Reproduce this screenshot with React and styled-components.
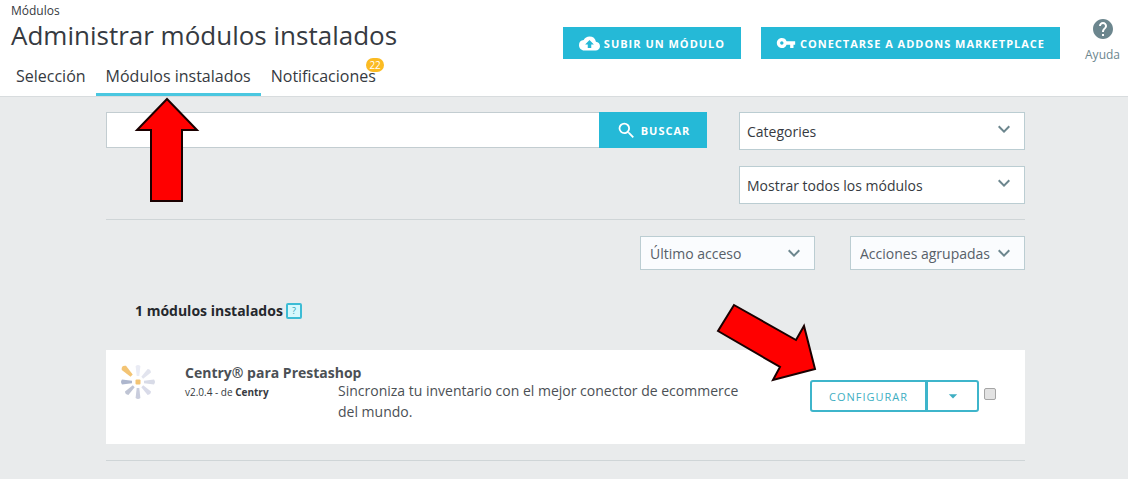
import React from "react";
import styled, { createGlobalStyle } from "styled-components";
import {
  MdArrowDropDown,
  MdCloudUpload,
  MdExpandMore,
  MdHelp,
  MdSearch,
  MdVpnKey,
} from "react-icons/md";

const GlobalStyle = createGlobalStyle`
  * {
    box-sizing: border-box;
  }

  body {
    margin: 0;
    background: #e9ebec;
    color: #363a41;
    font-family: "Open Sans", sans-serif;
    font-size: 14px;
  }

  button, input, select {
    font-family: inherit;
    margin: 0;
  }
`;

const Page = styled.div`
  position: relative;
`;

const Header = styled.header`
  display: flex;
  justify-content: space-between;
  background: #fff;
  border-bottom: 1px solid #d8dcde;
`;

const Crumb = styled.div`
  padding: 2px 11px 0;
  font-size: 12px;
  line-height: 18px;
`;

const PageTitle = styled.h1`
  margin: 0;
  padding: 0 11px;
  font-size: 26px;
  font-weight: 400;
  line-height: 30px;
`;

const Tabs = styled.nav`
  display: flex;
  padding: 10px 6px 0;
`;

const Tab = styled.a`
  position: relative;
  padding: 4px 10px 5px;
  border-bottom: 3px solid ${(props) => (props.$active ? "#4ac7e0" : "transparent")};
  color: #363a41;
  font-size: 16px;
  line-height: 24px;
  text-decoration: none;
`;

const TabBadge = styled.span`
  position: absolute;
  top: -2px;
  right: 2px;
  padding: 0 3px;
  border-radius: 7px;
  background: #fbbb22;
  color: #fff;
  font-size: 10px;
  line-height: 14px;
`;

const Actions = styled.div`
  display: flex;
  align-items: flex-start;
  gap: 20px;
  padding: 0 8px 0 0;
`;

const PrimaryButton = styled.button`
  display: flex;
  align-items: center;
  justify-content: center;
  gap: 4px;
  min-width: ${(props) => props.$minWidth || 0}px;
  height: ${(props) => props.$height || 32}px;
  padding: 0 15px;
  border: 0;
  background: #25b9d7;
  color: #fff;
  font-size: 11px;
  font-weight: 700;
  letter-spacing: 1px;
  text-transform: uppercase;
  white-space: nowrap;
  cursor: pointer;
`;

const HeaderButton = styled(PrimaryButton)`
  margin-top: 27px;
`;

const HelpLink = styled.a`
  display: flex;
  flex-direction: column;
  align-items: center;
  gap: 5px;
  margin: 17px 0 0 5px;
  color: #6c868e;
  font-size: 12px;
  line-height: 18px;
  text-decoration: none;
`;

const Content = styled.main`
  padding: 15px 103px 18px 106px;
`;

const Filters = styled.div`
  display: flex;
  align-items: flex-start;
  gap: 32px;
  padding-bottom: 15px;
  border-bottom: 1px solid #cfd5d7;
`;

const SearchForm = styled.form`
  display: flex;
  flex: 1;
`;

const SearchInput = styled.input`
  flex: 1;
  min-width: 0;
  height: 36px;
  padding: 0 10px;
  border: 1px solid #c3cdd1;
  border-right: 0;
  border-radius: 0;
  background: #fff;
  font-size: 14px;
`;

const FilterColumn = styled.div`
  display: flex;
  flex-direction: column;
  gap: 16px;
  width: 286px;
`;

const SelectWrap = styled.div`
  display: grid;
  align-items: center;
  width: ${(props) => props.$width || "100%"};
  color: #6c868e;

  > * {
    grid-area: 1 / 1;
  }

  svg {
    justify-self: end;
    margin: 0 9px ${(props) => (props.$small ? 0 : 4)}px 0;
    pointer-events: none;
  }
`;

const SelectBox = styled.select`
  width: 100%;
  height: ${(props) => (props.$small ? 34 : 38)}px;
  padding: 0 ${(props) => (props.$small ? 9 : 7)}px;
  border: 1px solid #bbcdd2;
  border-radius: 0;
  appearance: none;
  background: ${(props) => (props.$small ? "#fafcfe" : "#fff")};
  color: ${(props) => (props.$small ? "#576069" : "#363a41")};
  font-size: 14px;
`;

const BulkActions = styled.div`
  display: flex;
  justify-content: flex-end;
  gap: 35px;
  padding-top: 16px;
`;

const ListTitle = styled.h2`
  display: flex;
  align-items: center;
  gap: 3px;
  margin: 31px 0 29px 29px;
  font-size: 14px;
  font-weight: 700;
  line-height: 20px;
  color: #25282d;
`;

const HintButton = styled.button`
  width: 16px;
  height: 16px;
  padding: 0;
  border: 2px solid #3dbcd5;
  border-radius: 2px;
  background: #d6f8fd;
  color: #2f9fb5;
  font-size: 9px;
  line-height: 12px;
`;

const ModuleCard = styled.article`
  display: flex;
  align-items: flex-start;
  min-height: 94px;
  background: #fff;
`;

const ModuleLogo = styled.svg`
  flex: none;
  margin: 14px 29px 0 14px;
`;

const ModuleName = styled.h3`
  margin: 13px 0 0;
  font-size: 14px;
  font-weight: 700;
  line-height: 20px;
  color: #4b5055;
  white-space: nowrap;
`;

const ModuleVersion = styled.div`
  font-size: 10px;
  line-height: 18px;
`;

const ModuleInfo = styled.div`
  width: 153px;
  flex: none;
`;

const ModuleDescription = styled.p`
  flex: 1;
  max-width: 420px;
  margin: 30px 0 0;
  line-height: 21px;
  color: #4b5055;
`;

const ModuleActions = styled.div`
  display: flex;
  align-items: center;
  margin: 30px 29px 0 auto;
`;

const OutlineButton = styled.button`
  display: flex;
  align-items: center;
  justify-content: center;
  width: ${(props) => props.$width}px;
  height: 32px;
  padding: 0;
  border: 2px solid #3eb5cb;
  border-radius: ${(props) => (props.$last ? "0 3px 3px 0" : "3px 0 0 3px")};
  border-left-width: ${(props) => (props.$last ? 1 : 2)}px;
  background: #fff;
  color: #3eaec2;
  font-size: 11px;
  font-weight: 400;
  letter-spacing: 1px;
  text-transform: uppercase;
  cursor: pointer;
`;

const ModuleCheckbox = styled.input`
  width: 12px;
  height: 12px;
  margin: 0 0 4px 5px;
  border: 1px solid #a5a5a5;
  border-radius: 2px;
  appearance: none;
  background: #e2e2e2;
`;

const Divider = styled.hr`
  margin: 16px 0 0;
  border: 0;
  border-top: 1px solid #cfd5d7;
`;

const Arrow = styled.svg`
  position: absolute;
  left: ${(props) => props.$left}px;
  top: ${(props) => props.$top}px;
  pointer-events: none;

  polygon {
    fill: #ff0000;
    stroke: #1a0000;
    stroke-width: 2;
  }
`;

const Select = ({ label, options, small, width }) => (
  <SelectWrap $small={small} $width={width}>
    <SelectBox $small={small} aria-label={label}>
      {options.map((option) => (
        <option key={option}>{option}</option>
      ))}
    </SelectBox>
    <MdExpandMore size={24} />
  </SelectWrap>
);

const CentryLogo = () => (
  <ModuleLogo width="36" height="36" viewBox="-18 -18 36 36" aria-hidden="true">
    {[
      ["#e9ebf4", 0],
      ["#e2e4ee", 45],
      ["#d8dbe7", 90],
      ["#d9dbe9", 135],
      ["#c9cddd", 180],
      ["#bfc4d4", 225],
      ["#adb6cd", 270],
      ["#f3c474", 315],
    ].map(([color, angle]) => (
      <path
        key={angle}
        d={angle === 315 ? "M-1.5 -9 L-3 -20 Q0 -24 3 -20 L1.5 -9 Z" : "M-1.3 -6 L-2.4 -16 Q0 -18 2.4 -16 L1.3 -6 Z"}
        fill={color}
        transform={`rotate(${angle})`}
      />
    ))}
    <rect x="-2.5" y="-2.5" width="5" height="5" rx="1" fill="#f3c474" />
  </ModuleLogo>
);

const App = () => {
  return (
    <Page>
      <GlobalStyle />
      <Header>
        <div>
          <Crumb>Módulos</Crumb>
          <PageTitle>Administrar módulos instalados</PageTitle>
          <Tabs>
            <Tab href="#seleccion">Selección</Tab>
            <Tab href="#instalados" $active>Módulos instalados</Tab>
            <Tab href="#notificaciones">
              Notificaciones
              <TabBadge>22</TabBadge>
            </Tab>
          </Tabs>
        </div>
        <Actions>
          <HeaderButton $minWidth={178}>
            <MdCloudUpload size={21} />
            Subir un módulo
          </HeaderButton>
          <HeaderButton>
            <MdVpnKey size={20} />
            Conectarse a Addons Marketplace
          </HeaderButton>
          <HelpLink href="#ayuda">
            <MdHelp size={24} />
            Ayuda
          </HelpLink>
        </Actions>
      </Header>

      <Content>
        <Filters>
          <SearchForm onSubmit={(e) => e.preventDefault()}>
            <SearchInput type="text" aria-label="Buscar módulos" />
            <PrimaryButton type="submit" $height={36} $minWidth={108}>
              <MdSearch size={21} />
              Buscar
            </PrimaryButton>
          </SearchForm>
          <FilterColumn>
            <Select label="Categorías" options={["Categories"]} />
            <Select label="Estado" options={["Mostrar todos los módulos"]} />
          </FilterColumn>
        </Filters>

        <BulkActions>
          <Select small width="175px" label="Ordenar" options={["Último acceso"]} />
          <Select small width="175px" label="Acciones" options={["Acciones agrupadas"]} />
        </BulkActions>

        <ListTitle>
          1 módulos instalados
          <HintButton type="button">?</HintButton>
        </ListTitle>

        <ModuleCard>
          <CentryLogo />
          <ModuleInfo>
            <ModuleName>Centry® para Prestashop</ModuleName>
            <ModuleVersion>
              v2.0.4 - de <b>Centry</b>
            </ModuleVersion>
          </ModuleInfo>
          <ModuleDescription>
            Sincroniza tu inventario con el mejor conector de ecommerce del mundo.
          </ModuleDescription>
          <ModuleActions>
            <OutlineButton $width={117}>Configurar</OutlineButton>
            <OutlineButton $width={52} $last aria-label="Más acciones">
              <MdArrowDropDown size={20} />
            </OutlineButton>
            <ModuleCheckbox type="checkbox" aria-label="Seleccionar Centry" />
          </ModuleActions>
        </ModuleCard>
        <Divider />
      </Content>

      <Arrow $left={134} $top={96} width="66" height="108" aria-hidden="true">
        <polygon points="33,3 63,34 48,34 48,105 17,105 17,34 3,34" />
      </Arrow>
      <Arrow $left={716} $top={302} width="102" height="82" aria-hidden="true">
        <polygon points="18,3 80,38 88,24 99,67 57,78 64,65 2,29" />
      </Arrow>
    </Page>
  );
};

export default App;
